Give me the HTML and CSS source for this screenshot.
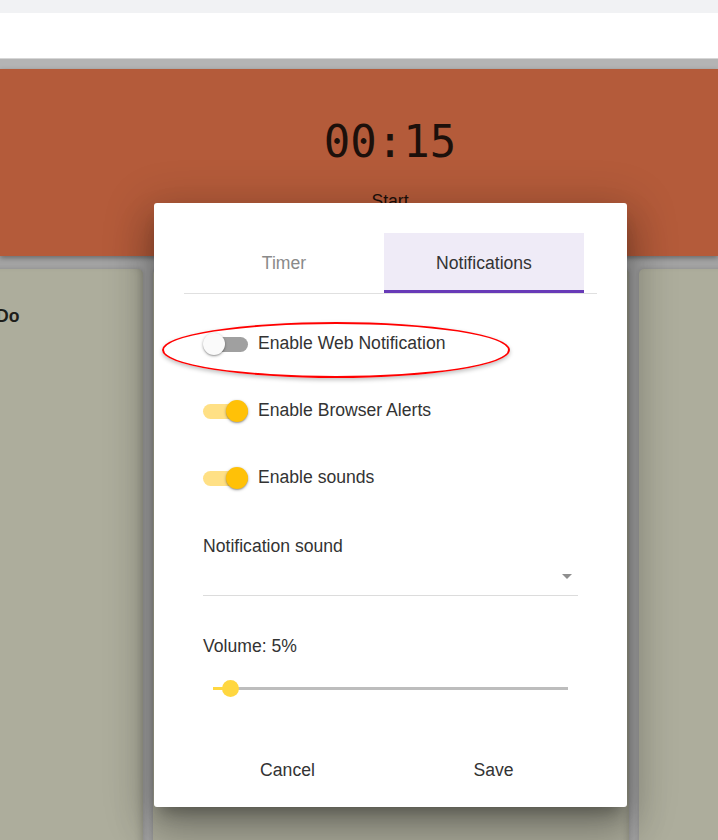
FILE: index.html
```html
<!DOCTYPE html>
<html lang="en">
<head>
<meta charset="utf-8">
<title>Pomodoro board</title>
<link rel="stylesheet" href="styles.css">
</head>
<body>
<div class="topbar"></div>
<nav class="navbar"></nav>
<main class="app">
  <section class="timer-panel">
    <div class="clock">00:15</div>
    <div class="start">Start</div>
  </section>
  <section class="board">
    <div class="column col-first"><h2 class="col-title">To Do</h2></div>
    <div class="column col-mid"></div>
    <div class="column col-last"></div>
  </section>
</main>

<div class="dialog">
  <div class="tabs">
    <div class="tab">Timer</div>
    <div class="tab active">Notifications</div>
  </div>
  <div class="dialog-body">
    <div class="switch-row">
      <span class="switch"><span class="track"></span><span class="thumb"></span></span>
      <span class="switch-label">Enable Web Notification</span>
    </div>
    <div class="switch-row">
      <span class="switch on"><span class="track"></span><span class="thumb"></span></span>
      <span class="switch-label">Enable Browser Alerts</span>
    </div>
    <div class="switch-row">
      <span class="switch on"><span class="track"></span><span class="thumb"></span></span>
      <span class="switch-label">Enable sounds</span>
    </div>
    <div class="field-label">Notification sound</div>
    <div class="select"><span class="arrow"></span></div>
    <div class="field-label volume-label">Volume: 5%</div>
    <div class="slider">
      <div class="slider-track"><div class="slider-fill" style="width:5%"></div><div class="slider-thumb" style="left:5%"></div></div>
    </div>
  </div>
  <div class="actions">
    <div class="btn">Cancel</div>
    <div class="btn">Save</div>
  </div>
  <div class="annotation"></div>
</div>
</body>
</html>
```
FILE: styles.css
```css
* { box-sizing: border-box; }
html, body { margin: 0; padding: 0; }
body {
  width: 718px;
  height: 840px;
  overflow: hidden;
  font-family: "Liberation Sans", Arial, sans-serif;
  background: #a4a4a4;
  position: relative;
}
.topbar { height: 13px; background: #f1f2f4; }
.navbar { height: 46px; background: #ffffff; border-bottom: 1px solid #d6d6d6; }
.app { background: #b4b4b4; padding-top: 10px; }
.timer-panel {
  height: 187px;
  background: #b45b3a;
  padding-top: 47px;
  padding-left: 62px;
  text-align: center;
  box-shadow: 0 2px 5px rgba(0,0,0,0.35);
  position: relative;
  z-index: 1;
}
.clock {
  font-family: "DejaVu Sans Mono", "Liberation Mono", monospace;
  font-size: 44px;
  line-height: 52px;
  color: #1c100b;
}
.start {
  margin-top: 23px;
  font-size: 17.6px;
  line-height: 20px;
  color: #1c100b;
}
.board {
  display: flex;
  gap: 10px;
  margin-left: -51px;
  padding-top: 13px;
  background: #a3a3a3;
  height: 600px;
}
.column {
  background: #adad9c;
  border-radius: 5px 5px 0 0;
  box-shadow: inset -6px 0 8px -6px rgba(0,0,0,0.25), 0 0 4px rgba(0,0,0,0.15);
  flex: none;
}
.col-first { width: 194px; padding: 35px 0 0 22px; }
.col-mid { width: 476px; }
.col-last { width: 476px; }
.col-title {
  margin: 0;
  font-size: 17.6px;
  line-height: 24px;
  font-weight: bold;
  color: #1e1e1a;
}

.dialog {
  position: absolute;
  left: 154px;
  top: 203px;
  width: 473px;
  height: 604px;
  background: #ffffff;
  border-radius: 3px;
  padding: 30px 30px 0;
  box-shadow: 0 11px 15px -7px rgba(0,0,0,0.3), 0 24px 38px 3px rgba(0,0,0,0.2), 0 9px 46px 8px rgba(0,0,0,0.18);
  color: #333333;
  z-index: 5;
}
.tabs {
  display: flex;
  height: 61px;
  border-bottom: 1px solid #e0e0e0;
}
.tab {
  width: 200px;
  height: 60px;
  display: flex;
  align-items: center;
  justify-content: center;
  font-size: 17.6px;
  color: #8a8a8a;
}
.tab.active {
  background: #efebf7;
  color: #333333;
  box-shadow: inset 0 -3px 0 #673ab7;
}
.dialog-body { padding: 16px 19px 0; }
.switch-row {
  height: 67px;
  display: flex;
  align-items: center;
  gap: 10px;
}
.switch {
  position: relative;
  width: 45px;
  height: 22px;
  flex: none;
}
.track {
  position: absolute;
  left: 3px;
  right: 0;
  top: 4px;
  height: 15px;
  border-radius: 8px;
  background: #a0a0a0;
}
.thumb {
  position: absolute;
  left: 0;
  top: 0;
  width: 22px;
  height: 22px;
  border-radius: 50%;
  background: #fafafa;
  box-shadow: 0 1px 3px rgba(0,0,0,0.35), 0 1px 1px rgba(0,0,0,0.14);
}
.switch.on .track { background: #ffe085; left: 0; }
.switch.on .thumb { left: 23px; background: #ffc107; }
.switch-label { font-size: 17.6px; color: #333333; }
.field-label {
  margin-top: 25px;
  font-size: 17.6px;
  line-height: 20px;
  color: #333333;
}
.select {
  height: 40px;
  border-bottom: 1px solid #dcdcdc;
  position: relative;
}
.arrow {
  position: absolute;
  right: 6px;
  top: 18px;
  width: 0;
  height: 0;
  border-left: 5px solid transparent;
  border-right: 5px solid transparent;
  border-top: 5px solid #8f8f8f;
}
.volume-label { margin-top: 40px; }
.slider { padding: 31px 10px 0; height: 55px; }
.slider-track {
  position: relative;
  height: 3px;
  background: #bdbdbd;
}
.slider-fill {
  height: 3px;
  background: #ffd740;
}
.slider-thumb {
  position: absolute;
  top: 50%;
  width: 17px;
  height: 17px;
  margin-left: -8.5px;
  margin-top: -8.5px;
  border-radius: 50%;
  background: #ffd740;
}
.actions {
  margin-top: 39px;
  display: flex;
  justify-content: center;
}
.btn {
  width: 206px;
  height: 40px;
  display: flex;
  align-items: center;
  justify-content: center;
  font-size: 17.6px;
  color: #333333;
}
.annotation {
  position: absolute;
  left: 8px;
  top: 119px;
  width: 348px;
  height: 56px;
  border: 2px solid #ff0000;
  border-radius: 50%;
  box-shadow: 0 2px 4px rgba(0,0,0,0.25);
}
```
